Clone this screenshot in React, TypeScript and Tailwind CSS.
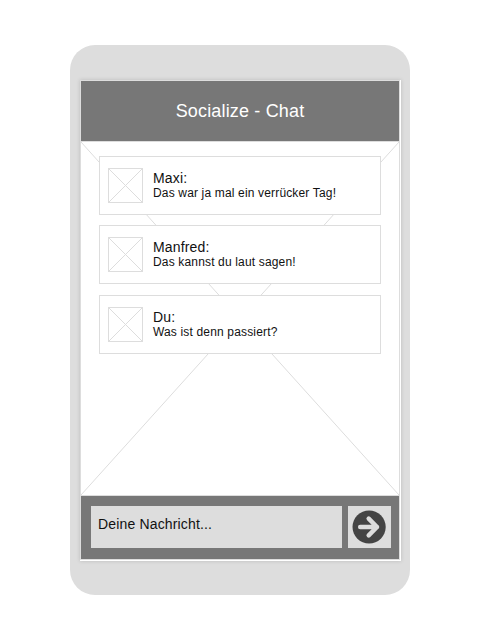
import React from "react";

type Message = { author: string; text: string; gap: string };

const messages: Message[] = [
  { author: "Maxi:", text: "Das war ja mal ein verrücker Tag!", gap: "" },
  { author: "Manfred:", text: "Das kannst du laut sagen!", gap: "mt-[10px]" },
  { author: "Du:", text: "Was ist denn passiert?", gap: "mt-[11px]" },
];

function Avatar() {
  return (
    <svg className="ml-2 mt-[11px] h-[35px] w-[35px] shrink-0" viewBox="0 0 35 35" fill="none" stroke="#dddddd">
      <rect x="0.5" y="0.5" width="34" height="34" />
      <path d="M0.5 0.5L34.5 34.5M34.5 0.5L0.5 34.5" />
    </svg>
  );
}

function MessageCard({ author, text, gap }: Message) {
  return (
    <div className={`flex h-[59px] w-[282px] border border-[#dddddd] bg-white ${gap}`}>
      <Avatar />
      <div className="ml-[10px] mt-[13px] whitespace-nowrap text-[#111111]">
        <p className="text-[14px] leading-[16px]">{author}</p>
        <p className="text-[12px] leading-[14px]">{text}</p>
      </div>
    </div>
  );
}

export default function App() {
  return (
    <div className="flex h-[640px] w-[480px] justify-center bg-white pt-[45px] font-['Liberation_Sans',Arial,sans-serif] tracking-[0.16px]">
      <div className="h-[550px] w-[340px] rounded-[25px] bg-[#dddddd] pl-[10px] pt-[35px]">
        <div className="h-[481px] w-[321px] bg-white shadow-[0_0_4px_rgba(0,0,0,0.16)]">
          <div className="flex h-[480px] w-[320px] flex-col border border-[#dddddd]">
            <header className="flex h-[60px] shrink-0 items-center justify-center bg-[#777777] text-[18px] text-white">
              Socialize - Chat
            </header>
            <main className="relative h-[355px] shrink-0 border-y border-[#dddddd]">
              <svg className="absolute left-0 top-0 h-[353px] w-[318px]" viewBox="0 0 318 353" stroke="#dddddd" fill="none">
                <path d="M0 0L318 353M318 0L0 353" />
              </svg>
              <div className="relative ml-[18px] pt-[14px]">
                {messages.map((m) => (
                  <MessageCard key={m.author} {...m} />
                ))}
              </div>
            </main>
            <footer className="flex h-[63px] shrink-0 gap-[6px] bg-[#777777] pl-[10px] pt-[10px]">
              <div className="h-[42px] w-[251px] bg-[#dddddd] pl-[7px] pt-[9px] text-[14px] leading-[18px] text-[#111111]">
                Deine Nachricht...
              </div>
              <button className="flex h-[42px] w-[43px] items-center bg-[#dddddd] pl-1" aria-label="Senden">
                <svg className="h-[34px] w-[34px]" viewBox="0 0 34 34" fill="none">
                  <circle cx="17.1" cy="17" r="16.6" fill="#444444" />
                  <path d="M8.2 17H25M16.7 8.7L25 17L16.7 25.3" stroke="#dddddd" strokeWidth="4.5" strokeLinecap="round" strokeLinejoin="round" />
                </svg>
              </button>
            </footer>
          </div>
        </div>
      </div>
    </div>
  );
}
